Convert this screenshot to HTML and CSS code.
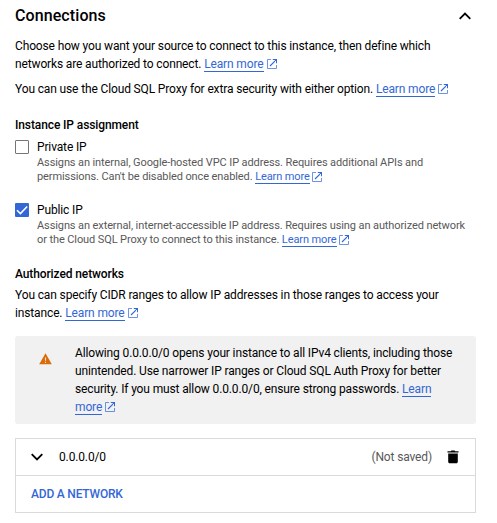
FILE: index.html
```html
<!DOCTYPE html>
<html lang="en">
<head>
<meta charset="utf-8">
<title>Connections</title>
<link rel="stylesheet" href="styles.css">
</head>
<body>
<svg class="defs" width="0" height="0">
  <symbol id="external" viewBox="0 0 10 10"><path d="M4 .5H.5v9h9V6" fill="none" stroke="currentColor" stroke-width="1" opacity=".7"/><path d="M5.8.5h3.7v3.7M9.2.8L3 7" fill="none" stroke="currentColor" stroke-width="1.1"/></symbol>
</svg>
<main class="panel">
  <header class="panel-header">
    <h1>Connections</h1>
    <svg class="chevron" viewBox="0 0 12 8"><path d="M.7 6.9L6 1.6l5.3 5.3"/></svg>
  </header>
  <p class="intro">Choose how you want your source to connect to this instance, then define which<br>networks are authorized to connect. <a>Learn more</a><svg class="ext"><use href="#external"/></svg></p>
  <p class="proxy">You can use the Cloud SQL Proxy for extra security with either option. <a>Learn more</a><svg class="ext"><use href="#external"/></svg></p>

  <h2>Instance IP assignment</h2>
  <div class="option">
    <span class="checkbox"></span>
    <div>
      <div class="label">Private IP</div>
      <p class="hint">Assigns an internal, Google-hosted VPC IP address. Requires additional APIs and<br>permissions. Can't be disabled once enabled. <a>Learn more</a><svg class="ext"><use href="#external"/></svg></p>
    </div>
  </div>
  <div class="option">
    <span class="checkbox checked"><svg viewBox="0 0 14 14"><path d="M2 7.3l3.4 3.3L12.2 3.5"/></svg></span>
    <div>
      <div class="label">Public IP</div>
      <p class="hint">Assigns an external, internet-accessible IP address. Requires using an authorized network<br>or the Cloud SQL Proxy to connect to this instance. <a>Learn more</a><svg class="ext"><use href="#external"/></svg></p>
    </div>
  </div>

  <h2>Authorized networks</h2>
  <p class="ranges">You can specify CIDR ranges to allow IP addresses in those ranges to access your<br>instance. <a>Learn more</a><svg class="ext"><use href="#external"/></svg></p>

  <div class="alert">
    <svg class="warning" viewBox="0 0 13 12"><path d="M6.5.3L12.8 11.3H.2z" fill="#d96b0b"/><path d="M6.5 4.5v3.2M6.5 8.7v1.2" stroke="#fbe3cc" stroke-width="1.1"/></svg>
    <p>Allowing 0.0.0.0/0 opens your instance to all IPv4 clients, including those<br>unintended. Use narrower IP ranges or Cloud SQL Auth Proxy for better<br>security. If you must allow 0.0.0.0/0, ensure strong passwords. <a>Learn<br>more</a><svg class="ext"><use href="#external"/></svg></p>
  </div>

  <div class="networks">
    <div class="row">
      <svg class="chevron" viewBox="0 0 12 8"><path d="M.7 1.1L6 6.4l5.3-5.3"/></svg>
      <span class="cidr">0.0.0.0/0</span>
      <span class="status">(Not saved)</span>
      <svg class="trash" viewBox="0 0 12 14"><path d="M.5 1.2h3.2L4.4.4h3.2l.7.8h3.2v1.4H.5zM1.2 3.6h9.6v8.2c0 .9-.6 1.5-1.5 1.5H2.7c-.9 0-1.5-.6-1.5-1.5z"/></svg>
    </div>
    <div class="row add">ADD A NETWORK</div>
  </div>
</main>
</body>
</html>
```
FILE: styles.css
```css
* { box-sizing: border-box; }
body { margin: 0; background: #fff; color: #000; font: 12px/18px Roboto, sans-serif; letter-spacing: -.138px; }
h1, h2, p { margin: 0; white-space: nowrap; }
.defs { display: block; height: 0; }
.panel { width: 461px; margin-left: 15px; padding-top: 5px; }
.panel-header { display: flex; justify-content: space-between; align-items: center; height: 21px; padding-right: 5px; }
h1 { font-size: 16px; line-height: 21px; font-weight: 500; letter-spacing: .09px; }
h2 { font-size: 12px; line-height: 18px; font-weight: 500; letter-spacing: -.11px; }
.chevron { width: 12px; height: 8px; fill: none; stroke: #000; stroke-width: 1.8; }
.intro { margin-top: 11px; }
.proxy { margin: 7px 0 18px; }
a { color: #3367d6; border-bottom: 1px solid #3367d6; }
.ext { width: 10px; height: 10px; margin-left: 3px; color: #3367d6; vertical-align: -1px; }
.option { display: flex; gap: 8px; margin-top: 4px; height: 59px; }
.option + .option { height: 64px; }
.checkbox { width: 14px; height: 14px; margin-top: 2px; border: 1px solid #757575; border-radius: 1px; }
.checked { border: 0; background: #3367d6; }
.checked svg { display: block; fill: none; stroke: #fff; stroke-width: 1.6; }
.label { line-height: 18px; }
.hint { font-size: 11px; line-height: 14px; color: #585858; letter-spacing: -.1px; }
.hint .ext { margin-left: 2px; vertical-align: -2px; }
.ranges { margin-top: 3px; }
.alert { display: flex; height: 88px; margin-top: 14px; padding: 8px 0 0 24px; border-radius: 3px; background: #f1f1f1; }
.warning { width: 13px; height: 12px; margin: 9px 23px 0 0; }
.networks { margin-top: 14px; border: 1px solid #dadada; }
.row { display: flex; align-items: center; height: 36px; padding: 0 16px 0 15px; }
.row + .row { height: 37px; border-top: 1px solid #dadada; }
.cidr { margin-left: 16px; }
.status { margin: 0 15px 0 auto; color: #585858; }
.trash { width: 12px; height: 14px; }
.add { color: #3367d6; font-weight: 500; letter-spacing: -.2px; }
```
